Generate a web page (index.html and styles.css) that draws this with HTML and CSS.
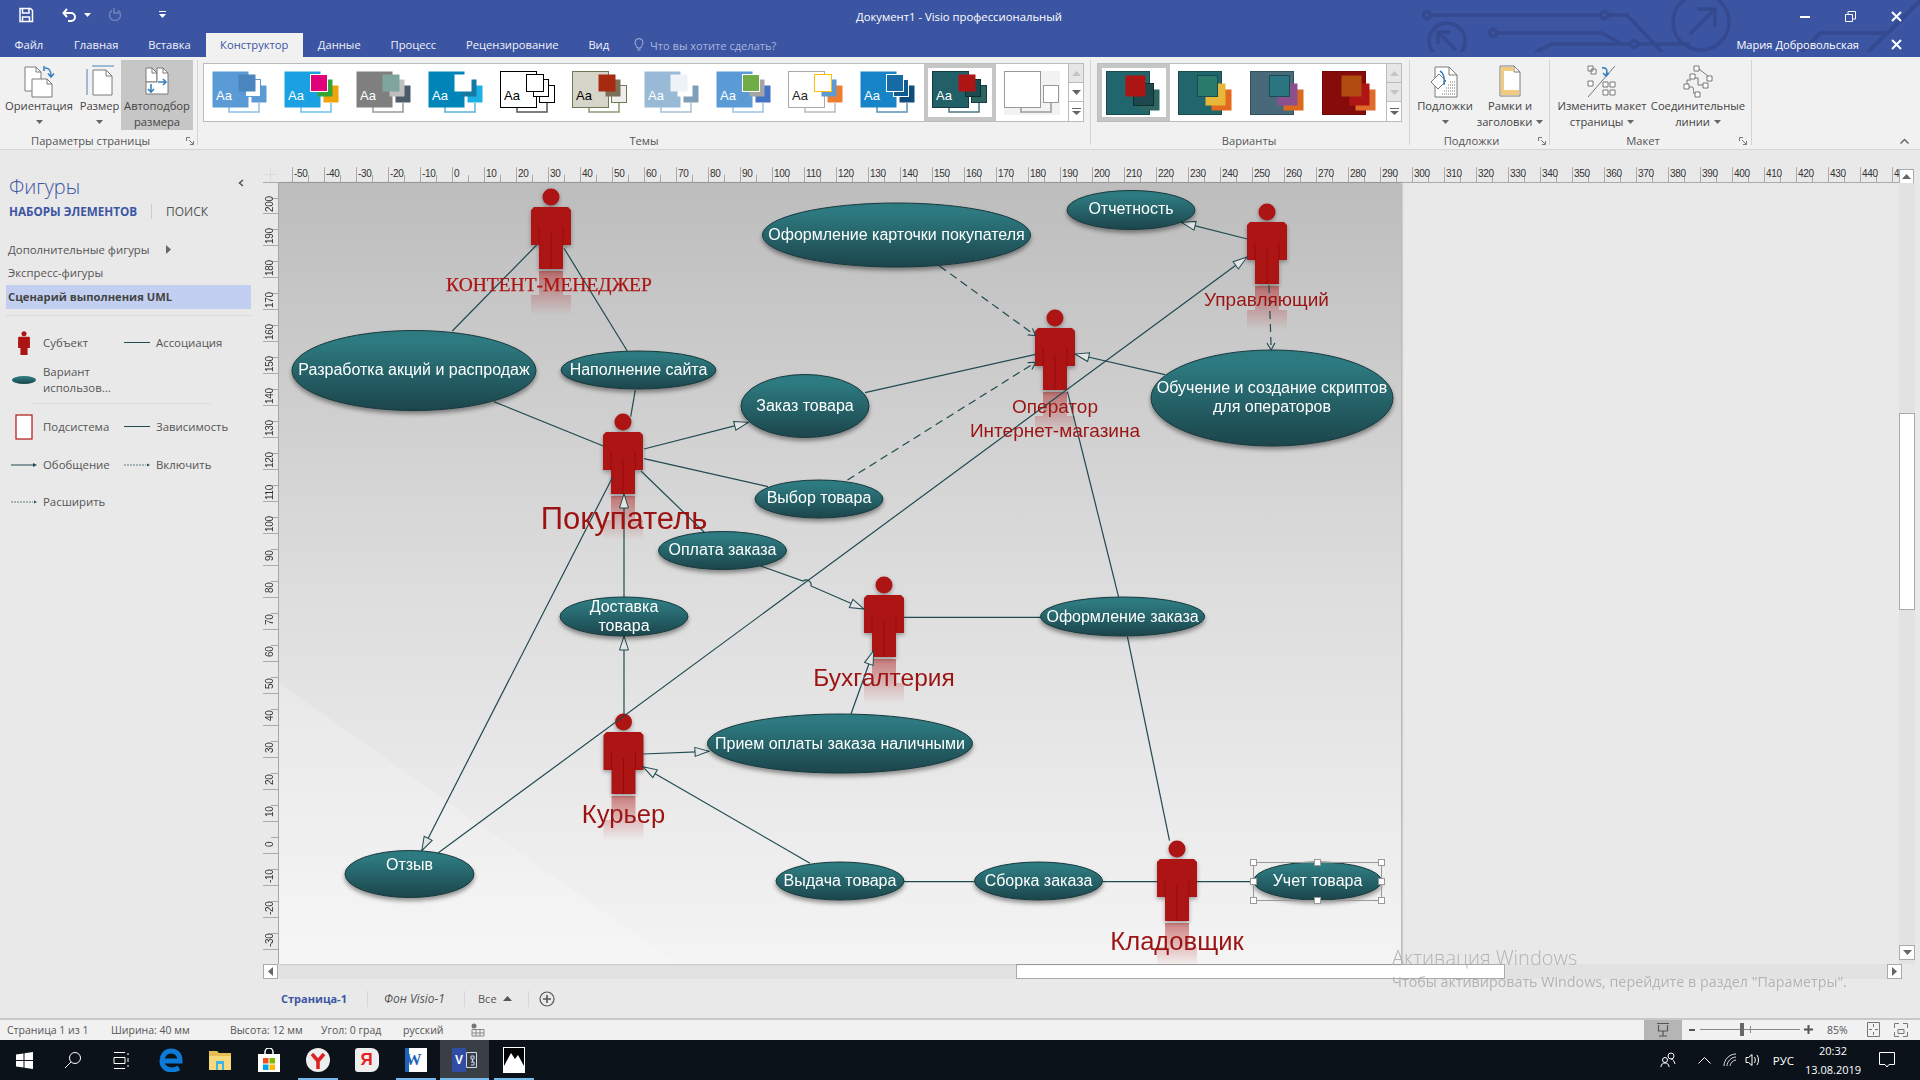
FILE: index.html
```html
<!DOCTYPE html>
<html lang="ru">
<head>
<meta charset="utf-8">
<title>Документ1 - Visio профессиональный</title>
<link rel="stylesheet" href="styles.css">
</head>
<body>
<svg class="defs" width="0" height="0">
  <defs>
    <symbol id="th" viewBox="0 0 56 44" overflow="visible">
      <path class="th-conn" d="M17 36v5h30v-9"/>
      <rect class="th-main" x="0.5" y="0.5" width="36" height="36"/>
      <rect class="th-s3" x="39.5" y="14.5" width="15" height="17"/>
      <rect class="th-s2" x="33.5" y="8.5" width="15" height="17"/>
      <rect class="th-s1" x="26.5" y="3.5" width="17" height="17"/>
      <text class="th-aa" x="4" y="29">Aa</text>
    </symbol>
    <symbol id="var" viewBox="0 0 56 44" overflow="visible">
      <rect class="th-main" x="0.5" y="0.5" width="43" height="43"/>
      <rect class="th-s3" x="33.5" y="18.5" width="20" height="21"/>
      <rect class="th-s2" x="27.5" y="12.5" width="20" height="22"/>
      <rect class="th-s1" x="19.5" y="4.5" width="20" height="21"/>
    </symbol>
    <linearGradient id="ell" x1="0" y1="0" x2="0" y2="1">
      <stop offset="0.15" stop-color="#2d7a80"/>
      <stop offset="1" stop-color="#1b454b"/>
    </linearGradient>
    <linearGradient id="refl" gradientUnits="userSpaceOnUse" x1="0" y1="74" x2="0" y2="118">
      <stop offset="0" stop-color="#b01414" stop-opacity=".5"/>
      <stop offset="1" stop-color="#b01414" stop-opacity="0"/>
    </linearGradient>
    <linearGradient id="pagebg" x1="0" y1="0" x2="0" y2="1">
      <stop offset="0" stop-color="#bdbdbd"/>
      <stop offset="0.5" stop-color="#dcdcdc"/>
      <stop offset="1" stop-color="#f4f4f4"/>
    </linearGradient>
    <symbol id="actor" x="-21" y="-9" width="42" height="128" viewBox="-21 -9 42 128" overflow="visible">
      <path class="a-refl" d="M-12 74H12V98H20V118H-20V98H-12Z"/>
      <g class="a-body">
        <circle class="a-fill" cx="0" cy="0" r="8.5"/>
        <path class="a-fill" d="M-17 10H17L20 13V48H12V72H-12V48H-20V13Z"/>
        <path class="a-crease" d="M-12 30V48M12 30V48M0 36V72"/>
      </g>
    </symbol>
    <marker id="hollow" markerUnits="userSpaceOnUse" markerWidth="18" markerHeight="12" refX="15" refY="5.5" orient="auto">
      <path d="M1 1L15 5.5L1 10Z" class="m-hollow"/>
    </marker>
    <marker id="open" markerUnits="userSpaceOnUse" markerWidth="12" markerHeight="12" refX="9" refY="5" orient="auto">
      <path d="M2 1L9 5L2 9" class="m-open"/>
    </marker>
  </defs>
</svg>

<div class="app">
  <header class="titlebar">
    <svg class="circuit" width="500" height="52" viewBox="1420 0 500 52">
      <g class="circuit-lines">
        <circle cx="1427" cy="15" r="3.5"/>
        <path d="M1431 15H1601M1608 15H1627L1662 52"/>
        <circle cx="1604.5" cy="15" r="3.5"/>
        <circle cx="1493" cy="33" r="3.5"/>
        <path d="M1497 33H1602L1622 44"/>
        <circle cx="1634" cy="44" r="3.5"/>
        <path d="M1638 44H1690M1630 44H1552L1535 52"/>
        <circle cx="1701" cy="22" r="28"/>
        <path d="M1690 34L1715 9M1697 9H1715V27"/>
        <circle cx="1447" cy="41" r="18"/>
        <path d="M1456 50L1438 32M1438 44V32H1450"/>
        <path d="M1802 52L1820 33H1888L1920 1M1868 52L1920 0"/>
      </g>
    </svg>
    <div class="topline">
      <div class="qat">
        <svg class="qat-save" width="16" height="16" viewBox="0 0 16 16"><path class="w-s15" d="M2 1.500H12.500L14.500 3.500V14.500H2Z"/><path class="w-s15" d="M4.500 1.500V6H11V1.500M4.500 14.500V10H11.500V14.500"/></svg>
        <svg class="qat-undo" width="16" height="16" viewBox="0 0 16 16"><path class="w-s2" d="M2.500 6H10A4 4 0 0 1 10 14H7M6 2L2.500 6L6 10"/></svg>
        <svg class="qat-down" width="7" height="5" viewBox="0 0 7 5"><path class="w-f" d="M0 0H7L3.500 4Z"/></svg>
        <svg class="qat-redo" width="14" height="16" viewBox="0 0 14 16"><path class="dim-s" d="M10 3.500A5.500 5.500 0 1 1 4 3.500M6 1V6H11"/></svg>
        <svg class="qat-more" width="7" height="8" viewBox="0 0 7 8"><path class="w-f" d="M0 0H7V1H0ZM0 3H7L3.500 7Z"/></svg>
      </div>
      <div class="doc-title">Документ1 - Visio профессиональный</div>
      <div class="winbtns">
        <svg width="10" height="2" viewBox="0 0 10 2"><rect class="w-f" width="10" height="2"/></svg>
        <svg width="11" height="11" viewBox="0 0 11 11"><path class="w-s" d="M.5 3.500H7.500V10.500H.5ZM3 3V.5H10.500V8H8"/></svg>
        <svg width="11" height="11" viewBox="0 0 11 11"><path class="w-s2" d="M1 1L10 10M10 1L1 10"/></svg>
      </div>
    </div>
    <nav class="tabs">
      <span class="tab tab-first">Файл</span>
      <span class="tab">Главная</span>
      <span class="tab">Вставка</span>
      <span class="tab tab-on">Конструктор</span>
      <span class="tab">Данные</span>
      <span class="tab">Процесс</span>
      <span class="tab">Рецензирование</span>
      <span class="tab">Вид</span>
      <svg class="lamp" width="10" height="14" viewBox="0 0 10 14"><path class="lamp-s" d="M3 10C3 7.500 1 7 1 4.500A4 4 0 0 1 9 4.500C9 7 7 7.500 7 10ZM3.500 12H6.500"/></svg>
      <span class="tell">Что вы хотите сделать?</span>
      <span class="user">Мария Добровольская</span>
      <svg class="user-x" width="11" height="11" viewBox="0 0 11 11"><path class="w-s2" d="M1 1L10 10M10 1L1 10"/></svg>
    </nav>
  </header>

  <section class="ribbon">
    <div class="group g-page">
      <div class="group-body">
        <div class="rbtn b-orient">
          <svg class="ricon" width="32" height="32" viewBox="0 0 32 32"><path class="pg" d="M2 2H13L18 7V26H2Z"/><path class="pg" d="M9 14H24L29 19V32H9Z"/><path class="pg-ln" d="M13 2V7H18M24 14V19H29"/><path class="blue-s" d="M22 3C27 3 28 6 28 11M25 8.500L28 12L31 8.500M21 1V6"/></svg>
          <span class="rlabel">Ориентация</span>
          <svg class="chev" width="7" height="4" viewBox="0 0 7 4"><path class="g-f" d="M0 0H7L3.500 4Z"/></svg>
        </div>
        <div class="rbtn b-size">
          <svg class="ricon" width="28" height="32" viewBox="0 0 28 32"><path class="blue-ln" d="M1 4V30M1 4M6 1H28"/><path class="pg" d="M7 5H20L26 11V30H7Z"/><path class="pg-ln" d="M20 5V11H26"/></svg>
          <span class="rlabel">Размер</span>
          <svg class="chev" width="7" height="4" viewBox="0 0 7 4"><path class="g-f" d="M0 0H7L3.500 4Z"/></svg>
        </div>
        <div class="rbtn b-fit">
          <svg class="ricon" width="24" height="32" viewBox="0 0 24 32"><path class="pg" d="M1 3H7L12 8V17H1Z"/><path class="pg" d="M12 3H18L23 8V29H1V17H12Z"/><path class="pg-ln" d="M7 3V8H12M18 3V8H23"/><path class="blue-s" d="M6 19V27M3 24L6 27L9 24M13 17H21M18 14L21 17L18 20"/></svg>
          <span class="rlabel">Автоподбор<br>размера</span>
        </div>
      </div>
      <div class="group-label">Параметры страницы<svg class="launch" width="8" height="8" viewBox="0 0 8 8"><path class="launch-s" d="M.5 4V.5H4M3 3L7.500 7.500M7.500 4V7.500H4"/></svg></div>
    </div>

    <div class="group g-themes">
      <div class="gallery gal-themes">
        <div class="gcell"><svg class="thumb t1"><use href="#th"/></svg></div>
        <div class="gcell"><svg class="thumb t2"><use href="#th"/></svg></div>
        <div class="gcell"><svg class="thumb t3"><use href="#th"/></svg></div>
        <div class="gcell"><svg class="thumb t4"><use href="#th"/></svg></div>
        <div class="gcell"><svg class="thumb t5"><use href="#th"/></svg></div>
        <div class="gcell"><svg class="thumb t6"><use href="#th"/></svg></div>
        <div class="gcell"><svg class="thumb t7"><use href="#th"/></svg></div>
        <div class="gcell"><svg class="thumb t8"><use href="#th"/></svg></div>
        <div class="gcell"><svg class="thumb t9"><use href="#th"/></svg></div>
        <div class="gcell"><svg class="thumb t10"><use href="#th"/></svg></div>
        <div class="gcell gsel"><svg class="thumb t11"><use href="#th"/></svg></div>
        <div class="gcell gblank"><svg class="thumb t12"><use href="#th"/></svg></div>
        <div class="gscroll">
          <span class="gs gs-off"><svg width="9" height="5" viewBox="0 0 9 5"><path class="off-f" d="M0 5L4.500 0L9 5Z"/></svg></span>
          <span class="gs"><svg width="9" height="5" viewBox="0 0 9 5"><path class="g-f" d="M0 0H9L4.500 5Z"/></svg></span>
          <span class="gs"><svg width="9" height="7" viewBox="0 0 9 7"><path class="g-f" d="M0 0H9V1H0ZM0 3H9L4.500 7Z"/></svg></span>
        </div>
      </div>
      <div class="group-label">Темы</div>
    </div>

    <div class="group g-vars">
      <div class="gallery gal-vars">
        <div class="gcell gsel"><svg class="thumb v1"><use href="#var"/></svg></div>
        <div class="gcell"><svg class="thumb v2"><use href="#var"/></svg></div>
        <div class="gcell"><svg class="thumb v3"><use href="#var"/></svg></div>
        <div class="gcell"><svg class="thumb v4"><use href="#var"/></svg></div>
        <div class="gscroll">
          <span class="gs gs-off"><svg width="9" height="5" viewBox="0 0 9 5"><path class="off-f" d="M0 5L4.500 0L9 5Z"/></svg></span>
          <span class="gs gs-off"><svg width="9" height="5" viewBox="0 0 9 5"><path class="off-f" d="M0 0H9L4.500 5Z"/></svg></span>
          <span class="gs"><svg width="9" height="7" viewBox="0 0 9 7"><path class="g-f" d="M0 0H9V1H0ZM0 3H9L4.500 7Z"/></svg></span>
        </div>
      </div>
      <div class="group-label">Варианты</div>
    </div>

    <div class="group g-back">
      <div class="group-body">
        <div class="rbtn b-back">
          <svg class="ricon" width="30" height="32" viewBox="0 0 30 32"><path class="pg" d="M5 2H19L27 10V32H5Z"/><path class="pg-ln" d="M19 2V10H27"/><path class="dots" d="M12 29H26M14 26H26M16 23H26M18 20H26M20 17H26"/><path class="pg" d="M1 17L9 9L16 16L8 24Z"/><path class="blue-s" d="M10 6C14 8 15 12 14 20"/></svg>
          <span class="rlabel">Подложки</span>
          <svg class="chev" width="7" height="4" viewBox="0 0 7 4"><path class="g-f" d="M0 0H7L3.500 4Z"/></svg>
        </div>
        <div class="rbtn b-frame">
          <svg class="ricon" width="22" height="32" viewBox="0 0 22 32"><path class="pg" d="M1 1H15L21 7V31H1Z"/><path class="pg-ln" d="M15 1V7H21"/><rect class="frame-f" x="2" y="2" width="3" height="28"/><rect class="frame-f" x="2" y="2" width="13" height="4"/><rect class="frame-f" x="2" y="25" width="18" height="5"/></svg>
          <span class="rlabel">Рамки и<br>заголовки <svg class="chev-in" width="7" height="4" viewBox="0 0 7 4"><path class="g-f" d="M0 0H7L3.500 4Z"/></svg></span>
        </div>
      </div>
      <div class="group-label">Подложки<svg class="launch" width="8" height="8" viewBox="0 0 8 8"><path class="launch-s" d="M.5 4V.5H4M3 3L7.500 7.500M7.500 4V7.500H4"/></svg></div>
    </div>

    <div class="group g-layout">
      <div class="group-body">
        <div class="rbtn b-relay">
          <svg class="ricon" width="30" height="32" viewBox="0 0 30 32"><path class="sq" d="M1 1H6V6H1ZM4 4H9V9H4ZM1 16H6V21H1ZM16 17H21V22H16ZM23 17H28V22H23ZM16 25H21V30H16ZM23 25H28V30H23Z"/><path class="diag" d="M1 32L28 1"/><path class="blue-s" d="M15 3C20 2 21 6 19 11M16 8L19 11L22 8"/></svg>
          <span class="rlabel">Изменить макет<br>страницы <svg class="chev-in" width="7" height="4" viewBox="0 0 7 4"><path class="g-f" d="M0 0H7L3.500 4Z"/></svg></span>
        </div>
        <div class="rbtn b-conn">
          <svg class="ricon" width="30" height="32" viewBox="0 0 30 32"><path class="sq" d="M11 1H16V6H11ZM24 11H29V16H24ZM7 9H12V14H7ZM20 18H25V23H20ZM1 19H6V24H1ZM12 27H17V32H12Z"/><path class="diag" d="M16 4L25 11M4 19V15H8M12 13H15V20H20M6 22H9C12 22 9 29 12 29"/></svg>
          <span class="rlabel">Соединительные<br>линии <svg class="chev-in" width="7" height="4" viewBox="0 0 7 4"><path class="g-f" d="M0 0H7L3.500 4Z"/></svg></span>
        </div>
      </div>
      <div class="group-label">Макет<svg class="launch launch-l" width="8" height="8" viewBox="0 0 8 8"><path class="launch-s" d="M.5 4V.5H4M3 3L7.500 7.500M7.500 4V7.500H4"/></svg></div>
    </div>
    <div class="ribbon-end">
      <svg width="9" height="6" viewBox="0 0 9 6"><path class="collapse" d="M.5 5.500L4.500 1.500L8.500 5.500"/></svg>
    </div>
  </section>

  <main class="main">
    <aside class="shapes">
      <div class="sh-head">
        <span class="sh-title">Фигуры</span>
        <svg width="6" height="8" viewBox="0 0 6 8"><path class="sh-chev" d="M5 1L1.500 4L5 7"/></svg>
      </div>
      <div class="sh-tabs"><b class="sh-tab-on">НАБОРЫ ЭЛЕМЕНТОВ</b><i class="sh-sep"></i><span class="sh-tab">ПОИСК</span></div>
      <div class="sh-list">
        <div class="sh-item">Дополнительные фигуры<svg class="sh-tri" width="5" height="9" viewBox="0 0 5 9"><path class="tri-f" d="M0 0L5 4.500L0 9Z"/></svg></div>
        <div class="sh-item">Экспресс-фигуры</div>
        <div class="sh-item sh-item-on">Сценарий выполнения UML</div>
      </div>
      <div class="sh-rule"></div>
      <div class="stencil">
        <div class="st-row st-30">
          <div class="st-cell st-a"><span class="st-ic"><svg width="14" height="24" viewBox="-20 -9 40 81"><circle class="a-fill" r="8.500"/><path class="a-fill" d="M-17 10H17L20 13V48H12V72H-12V48H-20V13Z"/></svg></span><span>Субъект</span></div>
          <div class="st-cell st-b"><span class="st-ic2"><svg width="26" height="3" viewBox="0 0 26 3"><path class="st-ln" d="M0 1.500H26"/></svg></span><span>Ассоциация</span></div>
        </div>
        <div class="st-row st-45">
          <div class="st-cell st-a"><span class="st-ic st-up"><svg width="26" height="10" viewBox="0 0 26 10"><ellipse fill="url(#ell)" cx="13" cy="5" rx="12" ry="4"/></svg></span><span>Вариант<br>использов...</span></div>
        </div>
        <div class="st-div"></div>
        <div class="st-row st-46">
          <div class="st-cell st-a"><span class="st-ic"><svg width="18" height="26" viewBox="0 0 18 26"><rect class="st-sub" x="1" y="1" width="16" height="24"/></svg></span><span>Подсистема</span></div>
          <div class="st-cell st-b"><span class="st-ic2"><svg width="26" height="3" viewBox="0 0 26 3"><path class="st-ln" d="M0 1.500H26"/></svg></span><span>Зависимость</span></div>
        </div>
        <div class="st-row st-30 st-gap">
          <div class="st-cell st-a"><span class="st-ic"><svg width="26" height="6" viewBox="0 0 26 6"><path class="st-ln" d="M0 3H23"/><path class="st-tip" d="M22 1L26 3L22 5Z"/></svg></span><span>Обобщение</span></div>
          <div class="st-cell st-b"><span class="st-ic2"><svg width="26" height="6" viewBox="0 0 26 6"><path class="st-dash" d="M0 3H22"/><path class="st-tip" d="M23 1.500L26 3L23 4.500Z"/></svg></span><span>Включить</span></div>
        </div>
        <div class="st-row st-30">
          <div class="st-cell st-a"><span class="st-ic"><svg width="26" height="6" viewBox="0 0 26 6"><path class="st-dash" d="M0 3H22"/><path class="st-tip" d="M23 1.500L26 3L23 4.500Z"/></svg></span><span>Расширить</span></div>
        </div>
      </div>
    </aside>

    <div class="work">
      <div class="ruler-h">
        <div class="ruler-corner"></div>
        <div class="ruler-track">
          <span class="rc">-50</span><span class="rc">-40</span><span class="rc">-30</span><span class="rc">-20</span><span class="rc">-10</span><span class="rc">0</span><span class="rc">10</span><span class="rc">20</span><span class="rc">30</span><span class="rc">40</span><span class="rc">50</span><span class="rc">60</span><span class="rc">70</span><span class="rc">80</span><span class="rc">90</span><span class="rc">100</span><span class="rc">110</span><span class="rc">120</span><span class="rc">130</span><span class="rc">140</span><span class="rc">150</span><span class="rc">160</span><span class="rc">170</span><span class="rc">180</span><span class="rc">190</span><span class="rc">200</span><span class="rc">210</span><span class="rc">220</span><span class="rc">230</span><span class="rc">240</span><span class="rc">250</span><span class="rc">260</span><span class="rc">270</span><span class="rc">280</span><span class="rc">290</span><span class="rc">300</span><span class="rc">310</span><span class="rc">320</span><span class="rc">330</span><span class="rc">340</span><span class="rc">350</span><span class="rc">360</span><span class="rc">370</span><span class="rc">380</span><span class="rc">390</span><span class="rc">400</span><span class="rc">410</span><span class="rc">420</span><span class="rc">430</span><span class="rc">440</span><span class="rc rc-last">4</span>
        </div>
        <div class="vbar-up"><svg width="9" height="5" viewBox="0 0 9 5"><path class="g-f" d="M0 5L4.500 0L9 5Z"/></svg></div>
      </div>
      <div class="canvas-row">
        <div class="ruler-v">
          <span class="rv rv-first"><em>200</em></span><span class="rv"><em>190</em></span><span class="rv"><em>180</em></span><span class="rv"><em>170</em></span><span class="rv"><em>160</em></span><span class="rv"><em>150</em></span><span class="rv"><em>140</em></span><span class="rv"><em>130</em></span><span class="rv"><em>120</em></span><span class="rv"><em>110</em></span><span class="rv"><em>100</em></span><span class="rv"><em>90</em></span><span class="rv"><em>80</em></span><span class="rv"><em>70</em></span><span class="rv"><em>60</em></span><span class="rv"><em>50</em></span><span class="rv"><em>40</em></span><span class="rv"><em>30</em></span><span class="rv"><em>20</em></span><span class="rv"><em>10</em></span><span class="rv"><em>0</em></span><span class="rv"><em>-10</em></span><span class="rv"><em>-20</em></span><span class="rv"><em>-30</em></span>
        </div>
        <svg class="page" width="1122" height="781" viewBox="279 183 1122 781">
          <rect x="279" y="183" width="1122" height="781" fill="url(#pagebg)"/>
          <path class="page-tri" d="M279 683L678 964H279Z"/>

          <use href="#actor" x="551" y="197" class="bg-a"/>
          <use href="#actor" x="623" y="422"/>
          <use href="#actor" x="1055" y="318"/>
          <use href="#actor" x="1267" y="212"/>
          <use href="#actor" x="884" y="585"/>
          <use href="#actor" x="623.500" y="722"/>
          <use href="#actor" x="1177" y="849"/>

          <g class="lines">
            <path d="M536.700 245L452.300 331"/>
            <path d="M564 248.300L627.300 351"/>
            <path d="M635.300 390L630.700 416.700"/>
            <path d="M494 401.700L603.300 446"/>
            <path d="M644 449L748.300 422.300" marker-end="url(#hollow)"/>
            <path d="M644 458.700L768 486.700"/>
            <path d="M641 471L705 533"/>
            <path d="M612.700 477L421.800 850.700" marker-end="url(#hollow)"/>
            <path d="M624 597V494" marker-end="url(#hollow)"/>
            <path d="M624 714V636" marker-end="url(#hollow)"/>
            <path d="M438 853L1247 257" marker-end="url(#hollow)"/>
            <path d="M760 565.700L803 581A5 5 0 0 1 811 586L864 609" marker-end="url(#hollow)"/>
            <path d="M904 617.300H1041"/>
            <path d="M851 714L873.600 650.700" marker-end="url(#hollow)"/>
            <path d="M643 754L709 751.300" marker-end="url(#hollow)"/>
            <path d="M810 863.300L643 766.700" marker-end="url(#hollow)"/>
            <path d="M1247.400 239L1181.500 222.300" marker-end="url(#hollow)"/>
            <path d="M865 392.700L1035.700 354.300"/>
            <path d="M1165 374.700L1075 354" marker-end="url(#hollow)"/>
            <path d="M1067.400 391.700L1118.700 597.300"/>
            <path d="M1127.400 636.700L1169.500 840.700"/>
            <path d="M904 881.700H974M1102.700 881.700H1157M1197 881.700H1253.600"/>
            <path class="dash" d="M939.500 266L1035.700 335.700" marker-end="url(#open)"/>
            <path class="dash" d="M847.500 480L1035.700 362.300" marker-end="url(#open)"/>
            <path class="dash" d="M1269 285L1271.200 350" marker-end="url(#open)"/>
          </g>

          <g class="ells">
            <ellipse cx="414" cy="370.500" rx="122" ry="40"/>
            <ellipse cx="638.500" cy="370" rx="77.500" ry="19"/>
            <ellipse cx="805" cy="406" rx="64" ry="31.500"/>
            <ellipse cx="896.500" cy="235" rx="134" ry="32"/>
            <ellipse cx="1131" cy="210" rx="64" ry="19.500"/>
            <ellipse cx="1272" cy="398" rx="121" ry="48"/>
            <ellipse cx="819" cy="499" rx="64" ry="19"/>
            <ellipse cx="722.500" cy="550.500" rx="64" ry="19"/>
            <ellipse cx="624" cy="616.500" rx="64" ry="19.500"/>
            <ellipse cx="1122.600" cy="616.500" rx="82" ry="19.500"/>
            <ellipse cx="840" cy="743.500" rx="132.500" ry="29.500"/>
            <ellipse cx="409.500" cy="874" rx="64.500" ry="23.500"/>
            <ellipse cx="840" cy="881" rx="64" ry="19"/>
            <ellipse cx="1038.500" cy="881" rx="64" ry="19"/>
            <ellipse cx="1317.500" cy="881" rx="64" ry="19"/>
          </g>

          <g class="etext">
            <text x="414" y="375">Разработка акций и распродаж</text>
            <text x="638.500" y="375">Наполнение сайта</text>
            <text x="805" y="411">Заказ товара</text>
            <text x="896.500" y="240">Оформление карточки покупателя</text>
            <text x="1131" y="214">Отчетность</text>
            <text x="1272" y="393">Обучение и создание скриптов</text>
            <text x="1272" y="412">для операторов</text>
            <text x="819" y="503">Выбор товара</text>
            <text x="722.500" y="555">Оплата заказа</text>
            <text x="624" y="612">Доставка</text>
            <text x="624" y="631">товара</text>
            <text x="1122.600" y="622">Оформление заказа</text>
            <text x="840" y="749">Прием оплаты заказа наличными</text>
            <text x="409.500" y="870">Отзыв</text>
            <text x="840" y="886">Выдача товара</text>
            <text x="1038.500" y="886">Сборка заказа</text>
            <text x="1317.500" y="886">Учет товара</text>
          </g>

          <g class="atext">
            <text class="a-32" x="624" y="529">Покупатель</text>
            <text class="a-26" x="623.500" y="823">Курьер</text>
            <text class="a-25" x="884" y="686">Бухгалтерия</text>
            <text class="a-26" x="1177" y="950">Кладовщик</text>
            <text class="a-20" x="1266.500" y="306">Управляющий</text>
            <text class="a-20" x="1055" y="413">Оператор</text>
            <text class="a-20" x="1055" y="437">Интернет-магазина</text>
            <text class="a-serif" x="549" y="291">КОНТЕНТ-МЕНЕДЖЕР</text>
          </g>

          <g class="sel">
            <rect class="sel-box" x="1253.500" y="862.500" width="128" height="38"/>
            <rect x="1250.500" y="859.500" width="6" height="6"/><rect x="1314.500" y="859.500" width="6" height="6"/><rect x="1378.500" y="859.500" width="6" height="6"/>
            <rect x="1250.500" y="878.500" width="6" height="6"/><rect x="1378.500" y="878.500" width="6" height="6"/>
            <rect x="1250.500" y="897.500" width="6" height="6"/><rect x="1314.500" y="897.500" width="6" height="6"/><rect x="1378.500" y="897.500" width="6" height="6"/>
          </g>
        </svg>
        <div class="void"></div>
        <div class="vbar">
          <div class="vthumb"></div>
          <div class="vbar-down"><svg width="9" height="5" viewBox="0 0 9 5"><path class="g-f" d="M0 0H9L4.500 5Z"/></svg></div>
        </div>
      </div>
      <div class="hbar">
        <span class="hbtn"><svg width="5" height="9" viewBox="0 0 5 9"><path class="g-f" d="M5 0V9L0 4.500Z"/></svg></span>
        <span class="hgap1"></span>
        <span class="hthumb"></span>
        <span class="hgap2"></span>
        <span class="hbtn"><svg width="5" height="9" viewBox="0 0 5 9"><path class="g-f" d="M0 0V9L5 4.500Z"/></svg></span>
      </div>
      <div class="pagetabs">
        <span class="pt pt-on">Страница-1</span><i class="pt-sep"></i>
        <span class="pt pt-bg">Фон Visio-1</span><i class="pt-sep"></i>
        <span class="pt pt-all">Все<svg width="9" height="5" viewBox="0 0 9 5"><path class="all-f" d="M0 5L4.500 0L9 5Z"/></svg></span><i class="pt-sep"></i>
        <svg class="pt-add" width="16" height="16" viewBox="0 0 16 16"><circle class="add-s" cx="8" cy="8" r="7"/><path class="add-s2" d="M4 8H12M8 4V12"/></svg>
      </div>
    </div>
  </main>

  <footer class="status">
    <span class="s1">Страница 1 из 1</span>
    <span class="s2">Ширина: 40 мм</span>
    <span class="s3">Высота: 12 мм</span>
    <span class="s4">Угол: 0 град</span>
    <span class="s5">русский</span>
    <svg class="s-rec" width="14" height="14" viewBox="0 0 14 14"><circle class="st-g" cx="3" cy="3" r="2.500"/><path class="st-g2" d="M1 6.500H13V13H1ZM5 6.500V13M9 6.500V13M1 10H13"/></svg>
    <span class="s-right">
      <span class="s-pres"><svg width="14" height="15" viewBox="0 0 14 15"><path class="pres" d="M1 1.500H13M2.500 3V9H11.500V3M7 9V14M3 14H11"/></svg></span>
      <span class="s-minus"></span>
      <span class="slider"><i class="slider-mark"></i><i class="slider-knob"></i></span>
      <svg class="s-plus" width="9" height="9" viewBox="0 0 9 9"><path class="plus" d="M0 4.500H9M4.500 0V9"/></svg>
      <span class="s-zoom">85%</span>
      <svg class="s-fit" width="13" height="15" viewBox="0 0 13 15"><path class="fit" d="M.5 .5H12.500V14.500H.5ZM6.500 2V5M6.500 10V13M2 7.500H5M8 7.500H11"/></svg>
      <svg class="s-pan" width="14" height="14" viewBox="0 0 14 14"><path class="fit" d="M.5 5V.5H5M9 .5H13.500V5M.5 9V13.500H5M4 6.500H10V10.500H4ZM9 13.500H13.500V9"/></svg>
    </span>
  </footer>

  <footer class="taskbar">
    <div class="tb-icon tb-w48"><svg width="17" height="17" viewBox="0 0 17 17"><path class="w-f" d="M0 2.500L7.500 1.500V8H0ZM8.500 1.300L17 0V8H8.500ZM0 9H7.500V15.500L0 14.500ZM8.500 9H17V17L8.500 15.700Z"/></svg></div>
    <div class="tb-icon tb-w48"><svg width="18" height="18" viewBox="0 0 18 18"><circle class="w-s" cx="11" cy="7" r="5.500"/><path class="w-s" d="M7 11L1 17"/></svg></div>
    <div class="tb-icon tb-w48"><svg width="17" height="17" viewBox="0 0 17 17"><path class="w-s" d="M1 .5H12M1 16.500H12M1 5.500H12V11.500H1ZM15 1V3M15 6V10M15 13V15"/></svg></div>
    <div class="tb-icon"><svg width="24" height="24" viewBox="0 0 24 24"><path class="edge" d="M4 13H21C21 6 17 3 12 3C6 3 3 8 3 13C3 19 8 22 13 22C16 22 18 21 20 20"/></svg></div>
    <div class="tb-icon"><svg width="22" height="20" viewBox="0 0 22 20"><path class="fold-d" d="M0 1H8L10 3H22V20H0Z"/><path class="fold-l" d="M0 6H22V20H0Z"/><path class="fold-b" d="M7 20V11H15V20H13V14H9V20Z"/></svg></div>
    <div class="tb-icon"><svg width="24" height="24" viewBox="0 0 24 24"><path class="bag" d="M1 6H23V24H1Z"/><path class="bag-s" d="M8 6V4A4 4 0 0 1 16 4V6"/><rect class="q1" x="6" y="10" width="5.500" height="5.500"/><rect class="q2" x="12.500" y="10" width="5.500" height="5.500"/><rect class="q3" x="6" y="16.500" width="5.500" height="5.500"/><rect class="q4" x="12.500" y="16.500" width="5.500" height="5.500"/></svg></div>
    <div class="tb-icon tb-run"><svg width="24" height="24" viewBox="0 0 24 24"><circle class="yb" cx="12" cy="12" r="12"/><path class="yb-s" d="M6 6L12 13L18 6M12 13V21"/></svg></div>
    <div class="tb-icon"><span class="ya">Я</span></div>
    <div class="tb-icon tb-run"><span class="wd"><b>W</b></span></div>
    <div class="tb-icon tb-active"><span class="vs"><b>V</b><svg width="11" height="16" viewBox="0 0 11 16"><path class="vs-s" d="M.5 .5H10.500V15.500H.5ZM5 4H8V7H5ZM5 10H8V13H5M6.500 7V10"/></svg></span></div>
    <div class="tb-icon tb-run"><svg width="22" height="26" viewBox="0 0 22 26"><rect class="pic-w" width="22" height="26"/><path class="pic-k" d="M1 19L8 6L12 12L15 8L21 19V1H1Z"/></svg></div>
    <div class="tray">
      <svg class="tr-ppl" width="16" height="16" viewBox="0 0 16 16"><g class="w-s"><circle cx="11" cy="4" r="3"/><circle cx="5" cy="8" r="2.500"/><path d="M1 15C1 12 3 11 5 11S9 12 9 15M11 7C13 7 14 9 15 12"/></g></svg>
      <svg class="tr-up" width="13" height="8" viewBox="0 0 13 8"><path class="w-s" d="M.5 7.500L6.500 1.500L12.500 7.500"/></svg>
      <svg class="tr-wifi" width="14" height="14" viewBox="0 0 14 14"><path class="wifi" d="M1 13C1 7 6 1 13 1M4 13C4 9 8 4 13 4M7 13C7 11 10 7 13 7"/></svg>
      <svg class="tr-snd" width="17" height="14" viewBox="0 0 17 14"><path class="w-s" d="M1 4.500H3.500L7 1.500V12.500L3.500 9.500H1ZM9.500 4C10.500 6 10.500 8 9.500 10M12 2C14 5 14 9 12 12"/></svg>
      <span class="tr-lang">РУС</span>
      <span class="tr-clock">20:32<br>13.08.2019</span>
      <svg class="tr-note" width="16" height="16" viewBox="0 0 16 16"><path class="w-s" d="M.5 .5H15.500V12.500H10L8 15L6 12.500H.5Z"/></svg>
    </div>
  </footer>

  <div class="activate">
    <div class="act-1">Активация Windows</div>
    <div class="act-2">Чтобы активировать Windows, перейдите в раздел "Параметры".</div>
  </div>
</div>
</body>
</html>
```
FILE: styles.css
```css
* { box-sizing: border-box; }
html, body { margin: 0; padding: 0; }
body { font-family: "Open Sans", "Noto Sans", sans-serif; overflow: hidden; background: #e9e9e9; color: #444; }
.defs { position: absolute; }
.app { width: 1920px; height: 1080px; display: flex; flex-direction: column; position: relative; overflow: hidden; }
svg { display: block; }

/* strokes and fills */
.w-s { fill: none; stroke: #fff; stroke-width: 1; }
.w-s15 { fill: none; stroke: #fff; stroke-width: 1.500; }
.w-s2 { fill: none; stroke: #fff; stroke-width: 2; }
.w-f { fill: #fff; }
.dim-s { fill: none; stroke: #6f82bd; stroke-width: 1.500; }
.lamp-s { fill: none; stroke: #aab6da; stroke-width: 1; }
.g-f { fill: #666; }
.off-f { fill: #c4c4c4; }
.pg { fill: #fff; stroke: #7a7a7a; stroke-width: 1; }
.pg-ln { fill: none; stroke: #7a7a7a; stroke-width: 1; }
.blue-s { fill: none; stroke: #3a7fc1; stroke-width: 1.600; }
.blue-ln { fill: none; stroke: #4a86bd; stroke-width: 1; }
.dots { fill: none; stroke: #777; stroke-width: 1; stroke-dasharray: 1 1; }
.frame-f { fill: #f0cb80; }
.sq { fill: #fff; stroke: #777; stroke-width: 1; }
.diag { fill: none; stroke: #777; stroke-width: 1; }
.launch-s { fill: none; stroke: #777; stroke-width: 1; }
.collapse { fill: none; stroke: #666; stroke-width: 1.500; }

/* title bar */
.titlebar { height: 57px; background: #3b55a3; position: relative; color: #fff; flex: none; }
.circuit { position: absolute; left: 1420px; top: 0; }
.circuit-lines { fill: none; stroke: #34498f; stroke-width: 3.500; }
.topline { height: 33px; display: flex; align-items: center; position: relative; }
.qat { display: flex; align-items: center; padding-left: 18px; padding-bottom: 3px; width: 300px; }
.qat-undo { margin-left: 27px; }
.qat-down { margin-left: 7px; }
.qat-redo { margin-left: 17px; }
.qat-more { margin-left: 37px; }
.doc-title { position: absolute; left: 754px; width: 410px; text-align: center; font-size: 11.300px; }
.winbtns { margin-left: auto; display: flex; align-items: center; gap: 35px; padding-right: 18px; }
.tabs { height: 24px; display: flex; align-items: center; font-size: 11.200px; position: relative; }
.tab { padding: 0 14.900px; height: 24px; line-height: 23px; color: #f0f2f8; }
.tab-first { padding-left: 14.500px; padding-right: 16px; }
.tab-on { background: #f1f1f1; color: #3b55a3; padding: 0 14.500px; }
.lamp { margin-left: 10px; }
.tell { margin-left: 6px; color: #aab6da; font-size: 11.100px; }
.user { margin-left: auto; color: #fff; font-size: 11.100px; margin-bottom: 2px; }
.user-x { margin: 0 18px 2px 32px; }

/* ribbon */
.ribbon { height: 93px; background: #f1f1f1; border-bottom: 1px solid #d6d6d6; display: flex; flex: none; font-size: 11.200px; color: #444; padding-top: 3px; }
.group { display: flex; flex-direction: column; position: relative; border-right: 1px solid #d4d4d4; margin-bottom: 4px; flex: none; }
.g-page { width: 198px; padding-right: 16px; }
.g-themes { width: 893px; align-items: flex-start; padding-left: 5px; padding-right: 5px; }
.g-vars { width: 319px; align-items: flex-start; padding-left: 6px; padding-right: 8px; }
.g-back { width: 140px; padding-right: 16px; }
.g-layout { width: 202px; padding-left: 5px; padding-right: 20px; }
.group-body { display: flex; height: 70px; flex: none; margin-right: -16px; }
.g-layout .group-body { margin-right: -20px; }
.group-label { height: 16px; line-height: 15px; margin-top: 3px; text-align: center; align-self: stretch; color: #555; position: relative; }
.gallery + .group-label { margin-top: 11px; }
.launch { position: absolute; right: -13px; top: 4px; }
.launch-l { right: -16px; }
.rbtn { display: flex; flex-direction: column; align-items: center; flex: none; height: 70px; text-align: center; line-height: 16px; }
.ricon { height: 38px; padding-top: 4px; flex: none; overflow: visible; }
.rlabel { white-space: nowrap; }
.chev { margin-top: 6px; }
.chev-in { display: inline-block; margin-left: 1px; vertical-align: 2px; }
.b-orient { width: 78px; }
.b-size { width: 43px; }
.b-fit { width: 72px; background: #c6c6c6; }
.b-back { width: 70px; }
.b-frame { width: 60px; }
.b-relay { width: 94px; }
.b-conn { width: 98px; }
.ribbon-end { flex: 1; display: flex; justify-content: flex-end; align-items: flex-end; padding: 0 11px 5px 0; }

.gallery { height: 59px; margin-top: 3px; border: 1px solid #bbb; background: #fff; display: flex; flex: none; }
.gcell { width: 72px; height: 57px; display: flex; align-items: center; justify-content: center; flex: none; }
.gsel { border: 4px solid #c6c6c6; }
.gblank .thumb { background: #f2f2f2; }
.thumb { width: 56px; height: 44px; overflow: visible; }
.gscroll { display: flex; flex-direction: column; width: 15px; margin-left: auto; border-left: 1px solid #bbb; flex: none; }
.gs { height: 19px; display: flex; align-items: center; justify-content: center; border-bottom: 1px solid #bbb; background: #fff; }
.gs:last-child { border-bottom: 0; }
.gs-off { background: #e6e6e6; }
.th-conn { fill: none; stroke: var(--c); stroke-width: 1.500; }
.th-main { fill: var(--a); stroke: var(--as, none); }
.th-s1 { fill: var(--p); stroke: var(--ps, none); }
.th-s2 { fill: var(--q); stroke: var(--qs, none); }
.th-s3 { fill: var(--r); stroke: var(--rs, none); }
.th-aa { font: 13px "Liberation Sans", sans-serif; fill: var(--t, #fff); }
.t1 { --a: #5b9bd5; --p: #4a86bd; --q: #fff; --qs: #5b9bd5; --r: #5b9bd5; --c: #8dc0e8; }
.t2 { --a: #1ba1e2; --p: #e0007a; --q: #33a63a; --r: #f0a30a; --c: #6cc0ea; --ps: #fff; }
.t3 { --a: #7f7f7f; --p: #7ea69e; --q: #bfbfbf; --r: #4d5a6a; --c: #999; }
.t4 { --a: #0085b8; --p: #fff; --q: #1778a2; --r: #1bb1e7; --c: #5cb3d9; }
.t5 { --a: #fff; --as: #000; --p: #fff; --ps: #000; --q: #fff; --qs: #000; --r: #fff; --rs: #000; --c: #555; --t: #000; }
.t6 { --a: #d5d6c9; --as: #6b7a55; --p: #a52a10; --q: #7b7057; --r: #eee; --rs: #6b7a55; --c: #8a9a75; --t: #000; }
.t7 { --a: #98bad6; --p: #eef3f8; --q: #fff; --r: #7f9fb8; --c: #a6c0d6; }
.t8 { --a: #5b9bd5; --p: #70ad47; --ps: #fff; --q: #a5a5a5; --r: #4472c4; --c: #9cc2e5; }
.t9 { --a: #fff; --as: #aaa; --p: #fff; --ps: #ffc000; --q: #5b9bd5; --r: #ed7d31; --c: #bbb; --t: #222; }
.t10 { --a: #1884c8; --p: #156ba6; --ps: #fff; --q: #0e5a8f; --qs: #fff; --r: #0e4d7a; --c: #5f93b5; }
.t11 { --a: #226067; --as: #173c40; --p: #ad1414; --q: #1c4a4f; --qs: #0f2f33; --r: #2d6560; --rs: #173c40; --c: #4d7b80; }
.t12 { --a: #fff; --as: #999; --p: none; --q: none; --r: #fff; --rs: #999; --c: #999; --t: none; }
.v1 { --a: #22666d; --as: #1b4a4f; --p: #ad1414; --q: #1d484d; --qs: #0f2f33; --r: #2d6560; }
.v2 { --a: #22666d; --as: #1b4a4f; --p: #2b7b6c; --ps: #1b4a4f; --q: #e8b73a; --r: #e2691e; }
.v3 { --a: #47697a; --as: #33505e; --p: #2a7580; --ps: #1b4a4f; --q: #8c4f8e; --r: #dc6a1c; }
.v4 { --a: #860c0c; --as: #6e0a0a; --p: #b04c10; --q: #b01515; --r: #e06a2a; }

/* main */
.main { height: 868px; display: flex; flex: none; }
.shapes { width: 263px; flex: none; padding-top: 25px; font-size: 11.400px; color: #555; }
.sh-head { display: flex; justify-content: space-between; align-items: flex-start; padding: 0 19px 0 9px; height: 24px; }
.sh-title { font-size: 20px; line-height: 24px; color: #3b55a3; font-weight: 300; }
.sh-chev { fill: none; stroke: #555; stroke-width: 1.600; }
.sh-head svg { margin-top: 4px; }
.sh-tabs { display: flex; align-items: center; height: 16px; margin-top: 4px; padding-left: 9px; font-size: 11.700px; }
.sh-tab-on { color: #3b55a3; width: 142px; white-space: nowrap; }
.sh-sep { width: 1px; height: 15px; background: #ccc; margin-right: 14px; }
.sh-tab { font-size: 12px; }
.sh-list { margin: 18.500px 12px 0 6px; }
.sh-item { height: 23px; line-height: 23px; padding-left: 2px; display: flex; align-items: center; }
.sh-tri { margin-left: 16px; }
.tri-f { fill: #666; }
.sh-item-on { height: 24px; margin-top: 1px; background: #c2cff0; font-weight: 700; color: #444; font-size: 11.200px; }
.sh-rule { margin: 6px 12px 0 6px; height: 1px; background: #d8d8d8; }
.stencil { padding-top: 12px; }
.st-row { display: flex; line-height: 16px; }
.st-30 { height: 30px; }
.st-45 { height: 45px; }
.st-46 { height: 46px; }
.st-gap { margin-bottom: 7px; }
.st-cell { display: flex; align-items: center; }
.st-a { width: 117px; }
.st-ic { width: 43px; flex: none; display: flex; justify-content: center; padding-left: 5px; }
.st-ic2 { width: 39px; flex: none; display: flex; justify-content: center; padding-left: 1px; }
.st-ln { fill: none; stroke: #1f4a4f; stroke-width: 1; }
.st-dash { fill: none; stroke: #5a7c80; stroke-width: 1; stroke-dasharray: 2 1; }
.st-tip { fill: #1f4a4f; }
.st-sub { fill: #fff; stroke: #ad1414; stroke-width: 1.200; }
.st-div { height: 1px; margin: 0 52px 0 32px; background: #dcdcdc; }

.work { width: 1657px; flex: none; display: flex; flex-direction: column; padding-top: 17px; }
.ruler-h { height: 16px; display: flex; flex: none; }
.ruler-corner { width: 15px; border-bottom: 1px solid #aaa; background: linear-gradient(#ddd, #ddd) center/1px 100% no-repeat, linear-gradient(#ddd, #ddd) center/100% 1px no-repeat; flex: none; }
.ruler-track { width: 1621px; padding-left: 14px; display: flex; overflow: hidden; border-bottom: 1px solid #aaa; flex: none; }
.rc { width: 32px; flex: none; border-left: 1px solid #aaa; padding-left: 1px; font: 10px/13px "Liberation Sans", sans-serif; color: #333; letter-spacing: -.3px; background: linear-gradient(#aaa, #aaa) 15px 100%/1px 7px no-repeat; }
.rc-last { width: 8px; background: none; }
.vbar-up { width: 15px; height: 15px; margin: 2px 0 0; border: 1px solid #aaa; background: #fff; display: flex; align-items: center; justify-content: center; flex: none; }
.canvas-row { height: 781px; display: flex; flex: none; }
.ruler-v { width: 16px; flex: none; display: flex; flex-direction: column; border-right: 1px solid #aaa; overflow: hidden; }
.rv { height: 32px; flex: none; border-bottom: 1px solid #aaa; display: flex; justify-content: flex-start; align-items: flex-end; background: linear-gradient(#aaa, #aaa) 100% 15px/7px 1px no-repeat; }
.rv-first { height: 31px; }
.rv em { font: normal 10px/13px "Liberation Sans", sans-serif; letter-spacing: -.3px; color: #333; writing-mode: vertical-rl; transform: rotate(180deg); height: 18px; text-align: center; }
.page { flex: none; display: block; filter: drop-shadow(1px 0 1px rgba(0, 0, 0, .3)); }
.page-tri { fill: #fff; opacity: .2; }
.lines path { fill: none; stroke: #1f4a50; stroke-width: 1.200; }
.lines path.dash { stroke-dasharray: 8 5; }
.m-hollow { fill: #e4e4e4; stroke: #1f4a50; stroke-width: 1; }
.m-open { fill: none; stroke: #1f4a50; stroke-width: 1.100; }
.a-refl { fill: url(#refl); }
.a-body { filter: drop-shadow(0 2px 2px rgba(0, 0, 0, .35)); }
.a-fill { fill: #ad1414; }
.a-crease { fill: none; stroke: #980a0a; stroke-width: 1; }
.ells ellipse { fill: url(#ell); stroke: #17393d; stroke-width: 1; filter: drop-shadow(0 3px 2px rgba(0, 0, 0, .4)); }
.etext text { font: 16px "Liberation Sans", sans-serif; fill: #fff; text-anchor: middle; }
.atext text { font-family: "Liberation Sans", sans-serif; fill: #9c1313; text-anchor: middle; }
.a-32 { font-size: 31px; }
.a-26 { font-size: 25.600px; }
.a-25 { font-size: 24.500px; }
.a-20 { font-size: 19px; }
.atext .a-serif { font-family: "Liberation Serif", serif; font-size: 19.500px; fill: #ad1414; stroke: #ad1414; stroke-width: .25px; }
.sel rect { fill: #fff; stroke: #999; stroke-width: 1; }
.sel .sel-box { fill: none; }
.void { flex: 1; background: #e9e9e9; }
.vbar { width: 16px; margin-right: 5px; flex: none; background: #e2e2e2; display: flex; flex-direction: column; align-items: stretch; }
.vthumb { height: 197px; margin-top: 230px; background: #fff; border: 1px solid #aaa; }
.vbar-down { margin-top: auto; height: 15px; margin-bottom: 4px; background: #fff; border: 1px solid #aaa; display: flex; align-items: center; justify-content: center; }
.hbar { height: 15px; display: flex; flex: none; padding-right: 18px; align-items: stretch; }
.hbtn { width: 15px; flex: none; border: 1px solid #aaa; background: #fff; display: flex; align-items: center; justify-content: center; }
.hgap1 { width: 738px; background: #e2e2e2; flex: none; }
.hthumb { width: 489px; background: #fff; border: 1px solid #aaa; flex: none; }
.hgap2 { flex: 1; background: #e2e2e2; }
.pagetabs { height: 39px; display: flex; align-items: center; font-size: 11px; padding: 0 0 0 18px; color: #555; }
.pt { white-space: nowrap; }
.pt-on { color: #3b55a3; font-weight: 700; width: 86px; }
.pt-sep { width: 1px; height: 16px; background: #d6d6d6; flex: none; }
.pt-bg { font-style: italic; width: 96px; padding-left: 16px; font-size: 12px; }
.pt-all { display: flex; align-items: center; gap: 6px; width: 63px; padding-left: 13px; }
.all-f { fill: #555; }
.pt-add { margin-left: 10px; }
.add-s { fill: none; stroke: #555; stroke-width: 1.200; }
.add-s2 { fill: none; stroke: #555; stroke-width: 1.600; }

/* status */
.status { height: 22px; flex: none; background: #f1f1f1; border-top: 2px solid #c8c8c8; display: flex; align-items: center; font-size: 10.500px; color: #555; white-space: nowrap; padding-left: 7px; padding-bottom: 1px; }
.s1 { width: 104px; }
.s2 { width: 119px; }
.s3 { width: 91px; }
.s4 { width: 82px; }
.s5 { width: 68px; }
.st-g { fill: #777; }
.st-g2 { fill: none; stroke: #888; stroke-width: 1; }
.s-right { margin-left: auto; display: flex; align-items: center; height: 20px; }
.s-pres { width: 38px; height: 20px; background: #b5b5b5; display: flex; align-items: center; justify-content: center; }
.pres { fill: none; stroke: #555; stroke-width: 1.200; }
.s-minus { width: 6px; height: 2px; background: #555; margin: 0 5px 0 7px; }
.slider { width: 100px; height: 1px; background: #888; position: relative; }
.slider-knob { position: absolute; left: 40px; top: -6px; width: 4px; height: 13px; background: #666; }
.slider-mark { position: absolute; left: 50px; top: -3px; width: 1px; height: 7px; background: #888; }
.s-plus { margin-left: 4px; }
.plus { fill: none; stroke: #555; stroke-width: 2; }
.s-zoom { margin-left: 14px; width: 34px; }
.s-fit { margin-left: 6px; }
.s-pan { margin-left: 14px; margin-right: 12px; }
.fit { fill: none; stroke: #777; stroke-width: 1; }

/* taskbar */
.taskbar { height: 40px; flex: none; background: #0b1219; display: flex; align-items: stretch; color: #fff; }
.tb-icon { width: 49px; height: 40px; display: flex; align-items: center; justify-content: center; flex: none; }
.tb-w48 { width: 48.700px; }
.tb-run { background: linear-gradient(#76b9ed, #76b9ed) center bottom/40px 2px no-repeat; }
.tb-active { background: linear-gradient(#76b9ed, #76b9ed) center bottom/100% 2px no-repeat, #3a3f45; }
.edge { fill: none; stroke: #0c7ad6; stroke-width: 5; }
.fold-d { fill: #e6bd55; }
.fold-l { fill: #f5d97c; }
.fold-b { fill: #3fb2e8; }
.bag { fill: #fff; }
.bag-s { fill: none; stroke: #fff; stroke-width: 1.500; }
.q1 { fill: #f25022; }
.q2 { fill: #7fba00; }
.q3 { fill: #00a4ef; }
.q4 { fill: #ffb900; }
.yb { fill: #eee; }
.yb-s { fill: none; stroke: #e02020; stroke-width: 3.500; }
.ya { width: 24px; height: 24px; background: #eee; color: #e52020; font: 700 17px/24px "Liberation Sans", sans-serif; text-align: center; border-radius: 3px 8px 8px 3px; display: block; }
.wd { width: 22px; height: 24px; background: #fff; display: block; border-left: 4px solid #1e63b8; text-align: left; }
.wd b { font: 700 16px/22px "Liberation Serif", serif; color: #1e63b8; margin-left: -3px; }
.vs { display: flex; align-items: center; }
.vs b { width: 14px; height: 24px; background: #2f4ea3; color: #fff; font: 700 12px/24px "Liberation Sans", sans-serif; text-align: center; display: block; }
.vs-s { fill: none; stroke: #cfd8ee; stroke-width: 1; }
.pic-w { fill: #fff; }
.pic-k { fill: #000; }
.tray { margin-left: auto; display: flex; align-items: center; font: 11.500px "Open Sans", sans-serif; }
.wifi { fill: none; stroke: #ddd; stroke-width: 1; }
.tr-up { margin-left: 22px; }
.tr-wifi { margin-left: 12px; }
.tr-snd { margin-left: 8px; }
.tr-lang { margin-left: 11px; }
.tr-clock { margin-left: 9px; text-align: center; line-height: 19px; width: 60px; font-size: 11px; }
.tr-note { margin: 0 25px 0 16px; }

/* activation watermark */
.activate { position: absolute; left: 1392px; top: 945px; color: #aaa; opacity: .85; pointer-events: none; white-space: nowrap; }
.act-1 { font-size: 20px; line-height: 26px; font-weight: 300; }
.act-2 { font-size: 14.300px; line-height: 19px; margin-top: 1px; }
```
